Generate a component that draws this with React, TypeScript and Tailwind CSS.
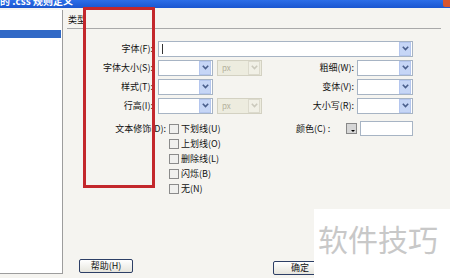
import React from 'react';

function Arrow({ disabled }: { disabled?: boolean }) {
  return (
    <div
      className={
        disabled
          ? 'w-[12px] h-[14px] flex items-center justify-center bg-[#f1f0e6] border border-[#dcdacd]'
          : 'w-[12px] h-[14px] flex items-center justify-center bg-[#c6d6f6] border border-[#b4c6ee]'
      }
    >
      <svg width="7" height="5" viewBox="0 0 7 5">
        <path
          d="M0.8 0.8 L3.5 3.6 L6.2 0.8"
          fill="none"
          stroke={disabled ? '#cbc9bc' : '#4a5f8c'}
          strokeWidth="1.6"
        />
      </svg>
    </div>
  );
}

function Select({ className, text, disabled }: { className: string; text?: string; disabled?: boolean }) {
  return (
    <div
      className={`${className} h-[16px] flex items-center justify-between p-px border ${
        disabled ? 'bg-[#edecdf] border-[#d3d1c2]' : 'bg-white border-[#a7b4c4]'
      }`}
    >
      <span className="pl-[3px] text-[8px] leading-[10px] text-[#b3b09c]">{text}</span>
      <Arrow disabled={disabled} />
    </div>
  );
}

function Label({ className, children }: { className: string; children: React.ReactNode }) {
  return <div className={`${className} text-right text-[9px] leading-[12px] text-[#111] whitespace-nowrap`}>{children}</div>;
}

function Check({ label }: { label: string }) {
  return (
    <div className="h-[15px] flex items-center">
      <div className="w-[10px] h-[10px] border border-[#8b8b8b] bg-[#f0f0ee]" />
      <span className="ml-[2px] text-[9px] leading-[12px] text-[#111] whitespace-nowrap">{label}</span>
    </div>
  );
}

export default function App() {
  return (
    <div className="relative w-[450px] h-[278px] overflow-hidden bg-[#f5f4f0] font-['Noto_Sans_CJK_SC',sans-serif]">
      {/* title bar, only its lower edge is in view */}
      <div className="h-[8px] flex justify-between overflow-hidden bg-gradient-to-b from-[#2c6ee8] to-[#1a56d0]">
        <span className="-mt-[5px] text-[10px] leading-[12px] font-bold text-white whitespace-nowrap">的 .css 规则定义</span>
        <div className="w-[7px] h-[7px] bg-[#d9552f] rounded-bl-[2px]" />
      </div>

      <div className="flex h-[270px]">
        {/* category list */}
        <div className="w-[63px] mt-[2px] h-[264px] bg-white border-r border-b border-[#9d9d9d]">
          <div className="mt-[20px] h-[8px] w-[61px] bg-[#3169c6]" />
        </div>

        <div className="flex-1 flex flex-col pr-[9px]">
          <div className="ml-[4px] h-[21px] border-b border-[#a9a9a9] pl-[1px] pt-[6px] text-[9px] leading-[12px] text-[#111]">
            类型
          </div>

          <div className="mt-[10px] flex flex-col">
            <div className="h-[19px] flex items-center">
              <Label className="w-[90px]">字体(F):</Label>
              <div className="ml-[5px] w-[255px] h-[16px] flex items-center justify-between p-px border border-[#a7b4c4] bg-white">
                <div className="ml-[2px] w-px h-[10px] bg-[#333]" />
                <Arrow />
              </div>
            </div>

            <div className="h-[19px] flex items-center">
              <Label className="w-[90px]">字体大小(S):</Label>
              <Select className="ml-[5px] w-[55px]" />
              <Select className="ml-[4px] w-[45px]" text="px" disabled />
              <Label className="w-[92px]">粗细(W):</Label>
              <Select className="ml-[3px] w-[56px]" />
            </div>

            <div className="h-[19px] flex items-center">
              <Label className="w-[90px]">样式(T):</Label>
              <Select className="ml-[5px] w-[55px]" />
              <div className="w-[49px]" />
              <Label className="w-[92px]">变体(V):</Label>
              <Select className="ml-[3px] w-[56px]" />
            </div>

            <div className="h-[19px] flex items-center">
              <Label className="w-[90px]">行高(I):</Label>
              <Select className="ml-[5px] w-[55px]" />
              <Select className="ml-[4px] w-[45px]" text="px" disabled />
              <Label className="w-[92px]">大小写(R):</Label>
              <Select className="ml-[3px] w-[56px]" />
            </div>

            <div className="mt-[6px] flex items-start">
              <Label className="w-[103px] h-[15px] flex items-center justify-end">文本修饰(D):</Label>
              <div className="ml-[3px] w-[127px] flex flex-col">
                <Check label="下划线(U)" />
                <Check label="上划线(O)" />
                <Check label="删除线(L)" />
                <Check label="闪烁(B)" />
                <Check label="无(N)" />
              </div>
              <div className="h-[15px] flex items-center">
                <span className="w-[50px] text-[9px] leading-[12px] text-[#111] whitespace-nowrap">颜色(C) :</span>
                <div className="relative w-[11px] h-[11px] border border-[#888] bg-[#d6d6d6]">
                  <div className="absolute right-[1px] bottom-[1px] w-0 h-0 border-l-[2px] border-r-[2px] border-t-[2px] border-l-transparent border-r-transparent border-t-black" />
                </div>
                <div className="ml-[3px] w-[53px] h-[15px] border border-[#a7b4c4] bg-white" />
              </div>
            </div>
          </div>

          <div className="mt-auto mb-[3px] ml-[16px] flex items-start">
            <button className="w-[54px] h-[14px] rounded-[2px] border border-[#2d3f66] bg-gradient-to-b from-white to-[#e6e5dd] text-[9px] leading-[12px] text-[#111]">
              帮助(H)
            </button>
            <button className="ml-[140px] mt-[2px] w-[54px] h-[14px] rounded-[2px] border border-[#2d3f66] bg-gradient-to-b from-white to-[#e6e5dd] text-[9px] leading-[12px] text-[#111]">
              确定
            </button>
          </div>
        </div>
      </div>

      {/* red annotation frame */}
      <div className="absolute left-[83px] top-[7px] w-[72px] h-[181px] border-[3px] border-[#c3272c]" />

      {/* watermark */}
      <div className="absolute right-0 bottom-0 w-[136px] h-[69px] bg-white pl-[4px] pt-[14px]">
        <span className="text-[30px] leading-[30px] text-[#c8c8c8] whitespace-nowrap">软件技巧</span>
      </div>
    </div>
  );
}
